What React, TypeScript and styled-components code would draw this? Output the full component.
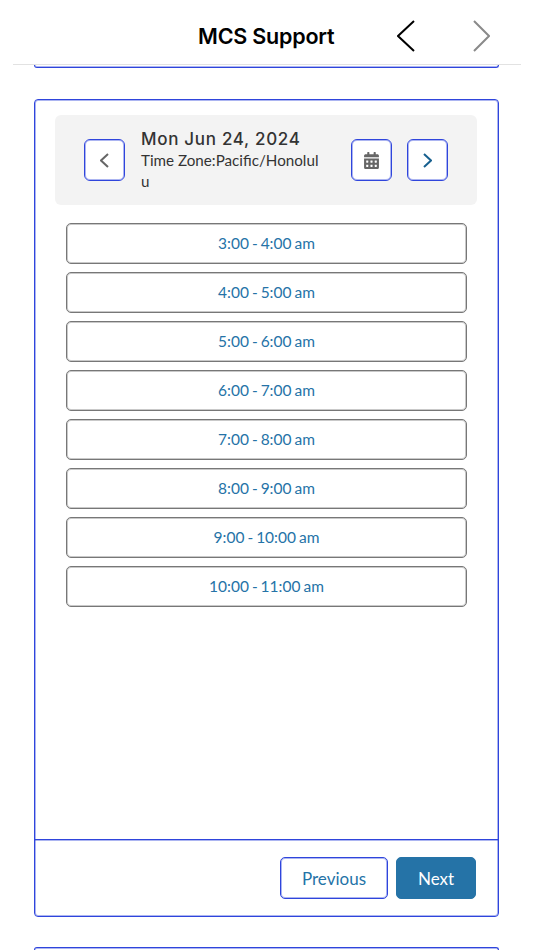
import styled, { createGlobalStyle } from 'styled-components';
import { FaCalendarAlt } from 'react-icons/fa';

const GlobalStyle = createGlobalStyle`
  html, body {
    margin: 0;
    padding: 0;
    background: #fff;
    font-family: Lato, "Liberation Sans", sans-serif;
  }
  * {
    box-sizing: border-box;
  }
`;

const Page = styled.div`
  width: 534px;
  height: 950px;
  overflow: hidden;
  display: flex;
  flex-direction: column;
`;

const Header = styled.header`
  height: 65px;
  margin: 0 13px;
  padding: 7px 31px 0 185px;
  border-bottom: 1px solid #e2e2e2;
  display: flex;
  align-items: center;
  justify-content: space-between;
`;

const Title = styled.h1`
  margin: 0;
  font-family: Inter, "Liberation Sans", sans-serif;
  font-weight: 600;
  font-size: 21.5px;
  letter-spacing: -0.2px;
  color: #000;
`;

const HeaderNav = styled.div`
  display: flex;
  align-items: center;
  gap: 58px;
`;

const PrevCardEnd = styled.div`
  height: 3px;
  margin: 0 35px 0 34px;
  border: 1px solid #2f45dc;
  border-top: none;
  border-radius: 0 0 3px 3px;
  box-shadow: inset 0 -1px 0 rgba(47, 69, 220, 0.4);
`;

const NextCardStart = styled.div`
  height: 3px;
  margin: 30px 35px 0 34px;
  border: 1px solid #2f45dc;
  border-bottom: none;
  border-radius: 3px 3px 0 0;
  box-shadow: inset 0 1px 0 rgba(47, 69, 220, 0.4);
`;

const Card = styled.section`
  height: 818px;
  margin: 31px 35px 0 34px;
  border: 1px solid #2f45dc;
  border-radius: 4px;
  box-shadow: inset 0 0 0 1px rgba(47, 69, 220, 0.4);
  display: flex;
  flex-direction: column;
`;

const CardBody = styled.div`
  flex: 1;
  padding: 15px 21px 0 20px;
`;

const DatePanel = styled.div`
  height: 90px;
  padding: 0 29px;
  background: #f3f3f3;
  border-radius: 6px;
  display: flex;
  align-items: center;
`;

const IconButton = styled.button`
  width: 41px;
  height: 42px;
  padding: 0;
  flex: none;
  background: #fff;
  border: 1px solid #2f45dc;
  border-radius: 6px;
  box-shadow: inset 0 0 0 1px rgba(47, 69, 220, 0.4);
  display: flex;
  align-items: center;
  justify-content: center;
  color: #666;
`;

const DateText = styled.div`
  width: 182px;
  margin: 0 28px 0 16px;
  flex: none;
  font-size: 15.2px;
  line-height: 21px;
  color: #333;
  word-break: break-all;
`;

const DateTitle = styled.div`
  font-family: Inter, "Open Sans", sans-serif;
  font-weight: 500;
  font-size: 17px;
  line-height: 22px;
  letter-spacing: 0.7px;
  word-break: normal;
  white-space: nowrap;
`;

const NextDayButton = styled(IconButton)`
  margin-left: 15px;
`;

const SlotList = styled.div`
  margin: 18px 10px 0 11px;
  display: flex;
  flex-direction: column;
  gap: 8px;
`;

const Slot = styled.button`
  height: 41px;
  padding: 0 0 2px;
  background: #fff;
  border: 1px solid #777;
  border-radius: 5px;
  box-shadow: inset 0 0 0 1px rgba(119, 119, 119, 0.4);
  font-family: Lato, "Liberation Sans", sans-serif;
  font-size: 15.5px;
  word-spacing: -1px;
  color: #2573a7;
`;

const Footer = styled.div`
  height: 77px;
  padding: 17px 22px 0 0;
  border-top: 1px solid #2f45dc;
  box-shadow: inset 0 1px 0 rgba(47, 69, 220, 0.4);
  display: flex;
  justify-content: flex-end;
  gap: 8px;
`;

const FooterButton = styled.button<{ $primary?: boolean }>`
  width: ${(p) => (p.$primary ? '80px' : '108px')};
  height: 42px;
  padding: 0;
  background: ${(p) => (p.$primary ? '#2573a7' : '#fff')};
  border: 1px solid ${(p) => (p.$primary ? '#2573a7' : '#2f45dc')};
  border-radius: 5px;
  box-shadow: ${(p) => (p.$primary ? 'none' : 'inset 0 0 0 1px rgba(47, 69, 220, 0.4)')};
  font-family: Lato, "Liberation Sans", sans-serif;
  font-size: 17px;
  color: ${(p) => (p.$primary ? '#fff' : '#2573a7')};
`;

const Chevron = ({
  left,
  width,
  height,
  color,
  stroke,
}: {
  left?: boolean;
  width: number;
  height: number;
  color: string;
  stroke: number;
}) => (
  <svg width={width} height={height} viewBox={`0 0 ${width} ${height}`} fill="none">
    <polyline
      points={
        left
          ? `${width - 1},1 1,${height / 2} ${width - 1},${height - 1}`
          : `1,1 ${width - 1},${height / 2} 1,${height - 1}`
      }
      stroke={color}
      strokeWidth={stroke}
    />
  </svg>
);

const slots = [
  '3:00 - 4:00 am',
  '4:00 - 5:00 am',
  '5:00 - 6:00 am',
  '6:00 - 7:00 am',
  '7:00 - 8:00 am',
  '8:00 - 9:00 am',
  '9:00 - 10:00 am',
  '10:00 - 11:00 am',
];

export default function App() {
  return (
    <Page>
      <GlobalStyle />
      <Header>
        <Title>MCS Support</Title>
        <HeaderNav>
          <Chevron left width={18} height={32} color="#000" stroke={2} />
          <Chevron width={17} height={32} color="#8a8a8a" stroke={2} />
        </HeaderNav>
      </Header>
      <PrevCardEnd />
      <Card>
        <CardBody>
          <DatePanel>
            <IconButton>
              <Chevron left width={9} height={15} color="#666" stroke={2} />
            </IconButton>
            <DateText>
              <DateTitle>Mon Jun 24, 2024</DateTitle>
              Time Zone:Pacific/Honolulu
            </DateText>
            <IconButton>
              <FaCalendarAlt size={17} color="#666" />
            </IconButton>
            <NextDayButton>
              <Chevron width={9} height={15} color="#17608f" stroke={2} />
            </NextDayButton>
          </DatePanel>
          <SlotList>
            {slots.map((slot) => (
              <Slot key={slot}>{slot}</Slot>
            ))}
          </SlotList>
        </CardBody>
        <Footer>
          <FooterButton>Previous</FooterButton>
          <FooterButton $primary>Next</FooterButton>
        </Footer>
      </Card>
      <NextCardStart />
    </Page>
  );
}
